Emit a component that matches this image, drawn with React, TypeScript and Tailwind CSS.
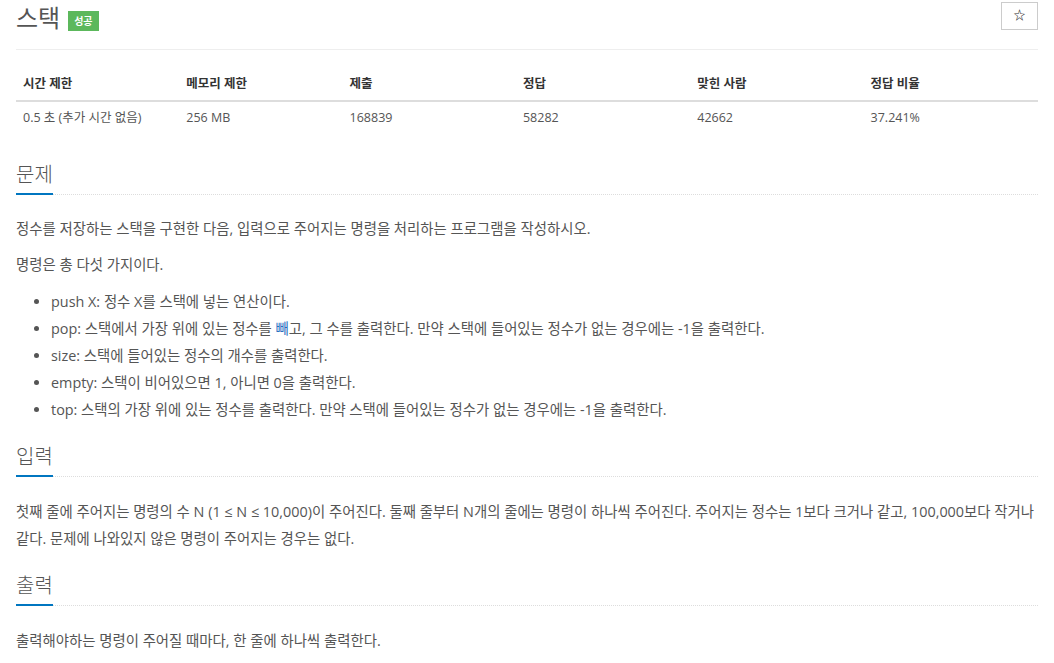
import React from "react";

const font = { fontFamily: '"Open Sans", "Noto Sans CJK KR", sans-serif' };

const stats = [
  { label: "시간 제한", value: "0.5 초 (추가 시간 없음)", w: "w-[164px]" },
  { label: "메모리 제한", value: "256 MB", w: "w-[164px]" },
  { label: "제출", value: "168839", w: "w-[174px]" },
  { label: "정답", value: "58282", w: "w-[175px]" },
  { label: "맞힌 사람", value: "42662", w: "w-[174px]" },
  { label: "정답 비율", value: "37.241%", w: "w-[175px]" },
];

function SectionTitle({ title, first }: { title: string; first?: boolean }) {
  return (
    <div
      className={`flex items-end border-b border-dotted border-[#ddd] ${first ? "mt-[27px]" : "mt-[20px]"}`}
    >
      <h2 className="text-[20px] leading-[28px] font-light text-[#555] pb-[4px] border-b-2 border-[#0076c0] -mb-px">
        {title}
      </h2>
    </div>
  );
}

export default function App() {
  return (
    <div className="bg-white min-h-screen px-4 text-[#555]" style={font}>
      <div className="flex items-start justify-between pt-[2px] pb-[17px] border-b border-[#eee]">
        <div className="flex items-center gap-2 pt-[2px]">
          <h1 className="text-[24px] leading-[28px] font-normal text-[#555]">스택</h1>
          <span className="mt-[5px] bg-[#5cb85c] text-white text-[10px] font-bold px-[6px] py-[2px] leading-[16px]">
            성공
          </span>
        </div>
        <button className="w-[37px] h-[28px] border border-[#ccc] bg-white flex items-center justify-center text-[12px] font-bold text-[#333]">
          ☆
        </button>
      </div>

      <table className="mt-[19px] w-full border-collapse text-[12.5px]">
        <thead>
          <tr className="border-b-2 border-[#ddd]">
            {stats.map((s) => (
              <th
                key={s.label}
                className={`${s.w} text-left font-bold text-[#333] px-[7px] h-[32px]`}
              >
                {s.label}
              </th>
            ))}
          </tr>
        </thead>
        <tbody>
          <tr>
            {stats.map((s) => (
              <td key={s.label} className="px-[7px] h-[33px] text-[#555]">
                {s.value}
              </td>
            ))}
          </tr>
        </tbody>
      </table>

      <div className="text-[14.4px] leading-[27px]">
        <SectionTitle title="문제" first />
        <p className="mt-[20px]">
          정수를 저장하는 스택을 구현한 다음, 입력으로 주어지는 명령을 처리하는 프로그램을 작성하시오.
        </p>
        <p className="mt-[9px]">명령은 총 다섯 가지이다.</p>
        <ul className="mt-[10px] list-disc pl-[35px]">
          <li>push X: 정수 X를 스택에 넣는 연산이다.</li>
          <li>
            pop: 스택에서 가장 위에 있는 정수를 <span className="text-[#2c6fbf]">빼</span>고, 그 수를
            출력한다. 만약 스택에 들어있는 정수가 없는 경우에는 -1을 출력한다.
          </li>
          <li>size: 스택에 들어있는 정수의 개수를 출력한다.</li>
          <li>empty: 스택이 비어있으면 1, 아니면 0을 출력한다.</li>
          <li>top: 스택의 가장 위에 있는 정수를 출력한다. 만약 스택에 들어있는 정수가 없는 경우에는 -1을 출력한다.</li>
        </ul>

        <SectionTitle title="입력" />
        <p className="mt-[21px]">
          첫째 줄에 주어지는 명령의 수 N (1 ≤ N ≤ 10,000)이 주어진다. 둘째 줄부터 N개의 줄에는 명령이 하나씩
          주어진다. 주어지는 정수는 1보다 크거나 같고, 100,000보다 작거나 같다. 문제에 나와있지 않은 명령이
          주어지는 경우는 없다.
        </p>

        <SectionTitle title="출력" />
        <p className="mt-[21px]">출력해야하는 명령이 주어질 때마다, 한 줄에 하나씩 출력한다.</p>
      </div>
    </div>
  );
}
